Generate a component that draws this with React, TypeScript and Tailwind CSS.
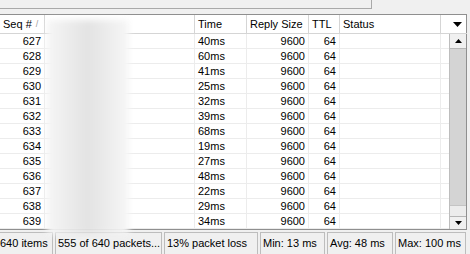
import React from 'react';

const rows = [
  ['627', '40ms'],
  ['628', '60ms'],
  ['629', '41ms'],
  ['630', '25ms'],
  ['631', '32ms'],
  ['632', '39ms'],
  ['633', '68ms'],
  ['634', '19ms'],
  ['635', '27ms'],
  ['636', '48ms'],
  ['637', '22ms'],
  ['638', '29ms'],
  ['639', '34ms'],
];

const cell = 'h-[15px] border-r border-b border-[#ececec] px-[3px] leading-[14px] truncate';

export default function App() {
  return (
    <div className="relative h-[254px] w-[470px] overflow-hidden bg-[#f0f0f0] text-[11px] text-black [font-family:'Liberation_Sans',Arial,sans-serif]">
      {/* panel above the list */}
      <div className="h-[9px] w-[372px] border-r border-b border-[#a9a9a9]" />

      <div className="mt-[5px] w-[467px] border-t border-r border-b border-[#8f8f8f] bg-white">
        {/* header */}
        <div className="grid h-[19px] grid-cols-[45px_150px_52px_62px_31px_101px_26px] bg-white">
          <div className="flex items-center border-r border-b border-[#d5d5d5] pl-[3px] leading-none">
            Seq #<span className="ml-[4px] text-[9px] text-[#a0a0a0]">/</span>
          </div>
          <div className="border-r border-b border-[#d5d5d5]" />
          <div className="flex items-center border-r border-b border-[#d5d5d5] pl-[3px]">Time</div>
          <div className="flex items-center border-r border-b border-[#d5d5d5] pl-[3px]">Reply Size</div>
          <div className="flex items-center border-r border-b border-[#d5d5d5] pl-[3px]">TTL</div>
          <div className="flex items-center border-r border-b border-[#d5d5d5] pl-[3px]">Status</div>
          <div className="flex items-center justify-center border-b border-[#d5d5d5] pl-[6px]">
            <svg width="9" height="5" viewBox="0 0 9 5"><path d="M0 0h9L4.5 5z" fill="#000" /></svg>
          </div>
        </div>

        {/* body */}
        <div className="flex">
          <div className="grid grid-cols-[45px_150px_52px_62px_31px_101px_8px]">
            {rows.map(([seq, time]) => (
              <React.Fragment key={seq}>
                <div className={`${cell} text-right`}>{seq}</div>
                <div className={cell} />
                <div className={cell}>{time}</div>
                <div className={`${cell} text-right`}>9600</div>
                <div className={`${cell} text-right`}>64</div>
                <div className={cell} />
                <div className="h-[15px] border-b border-[#ececec]" />
              </React.Fragment>
            ))}
          </div>

          {/* scrollbar */}
          <div className="flex w-[17px] flex-col border-l border-[#bdbdbd] bg-[#d4d4d4]">
            <div className="flex h-[15px] items-center justify-center border-b border-[#b5b5b5] bg-[#f0f0f0]">
              <svg width="7" height="4" viewBox="0 0 7 4"><path d="M0 4h7L3.5 0z" fill="#000" /></svg>
            </div>
            <div className="flex-1" />
            <div className="h-[11px] border-t border-[#c4c4c4] bg-[#ececec]" />
            <div className="flex h-[13px] items-center justify-center border-t border-[#b5b5b5] bg-[#f0f0f0]">
              <svg width="7" height="4" viewBox="0 0 7 4"><path d="M0 0h7L3.5 4z" fill="#000" /></svg>
            </div>
          </div>
        </div>
      </div>

      {/* status bar */}
      <div className="mt-[2px] flex h-[22px] gap-[2px] pr-[4px]">
        <div className="flex w-[53px] items-center border-t border-r border-[#bdbdbd] leading-none">640 items</div>
        <div className="flex w-[107px] items-center border-t border-r border-l border-[#bdbdbd] pl-[2px] leading-none">555 of 640 packets...</div>
        <div className="flex w-[94px] items-center border-t border-r border-l border-[#bdbdbd] pl-[2px] leading-none">13% packet loss</div>
        <div className="flex w-[65px] items-center border-t border-r border-l border-[#bdbdbd] pl-[2px] leading-none">Min: 13 ms</div>
        <div className="flex w-[66px] items-center border-t border-r border-l border-[#bdbdbd] pl-[2px] leading-none">Avg: 48 ms</div>
        <div className="flex flex-1 items-center border-t border-r border-l border-[#bdbdbd] pl-[2px] leading-none">Max: 100 ms</div>
      </div>

      {/* blurred address column */}
      <div className="pointer-events-none absolute top-[20px] left-[47px] h-[214px] w-[82px] bg-gradient-to-r from-[#f6f6f6] via-[#e3e3e3] to-[#f7f7f7] blur-[3px]" />
    </div>
  );
}
